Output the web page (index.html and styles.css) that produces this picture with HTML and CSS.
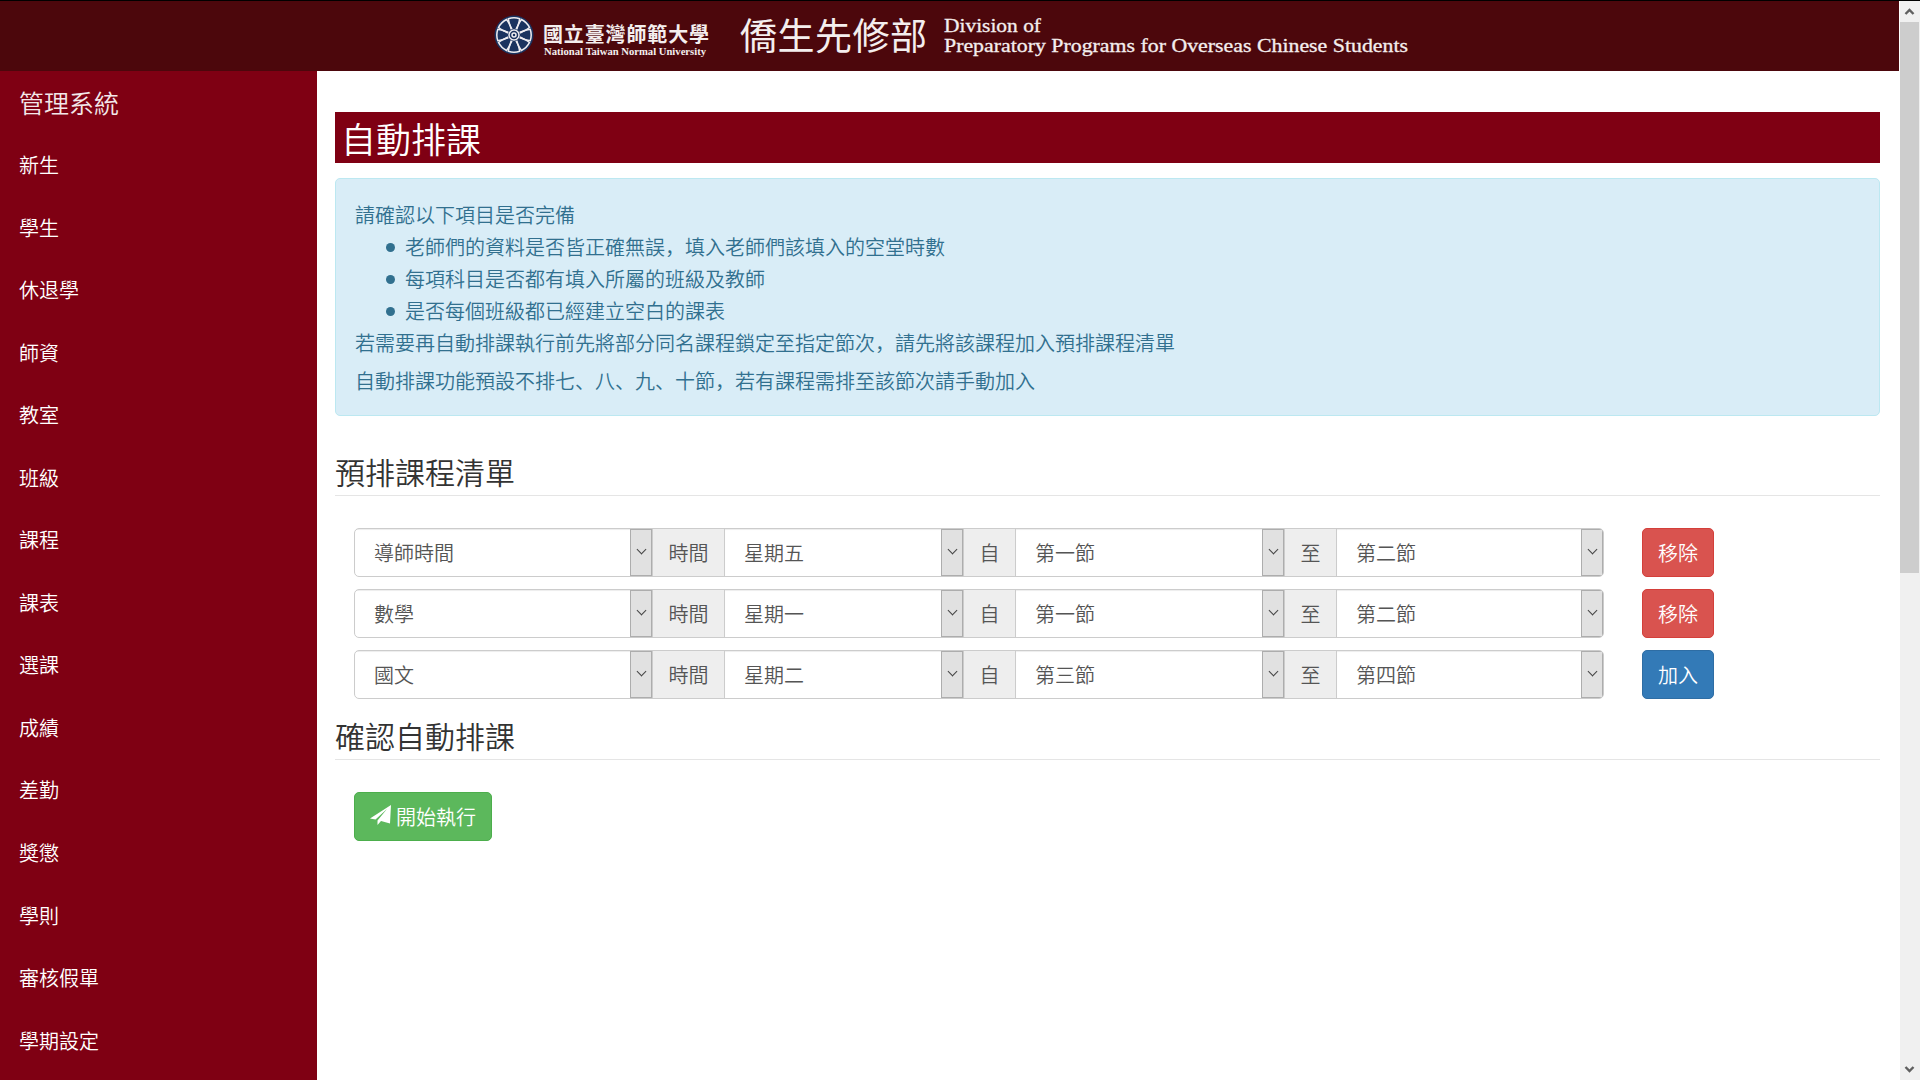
FILE: index.html
```
<!DOCTYPE html>
<html lang="zh-Hant">
<head>
<meta charset="utf-8">
<title>自動排課</title>
<link rel="stylesheet" href="styles.css">
</head>
<body>
<div class="page">
  <header class="banner">
    <svg class="banner-logo" width="920" height="70" viewBox="490 1 920 70">
      <circle cx="514" cy="35" r="19.5" fill="#1b335f"/>
      <g fill="none" stroke="#eeecf0" stroke-width="1.5">
        <circle cx="514" cy="35" r="5"/>
        <circle cx="514" cy="35" r="2"/>
        <g id="petal"><path d="M512 29 L509.500 24.500 L508.300 18.800 Q514 16.800 519.700 18.800 L518.500 24.500 L516 29"/></g>
        <use href="#petal" transform="rotate(45 514 35)"/>
        <use href="#petal" transform="rotate(90 514 35)"/>
        <use href="#petal" transform="rotate(135 514 35)"/>
        <use href="#petal" transform="rotate(180 514 35)"/>
        <use href="#petal" transform="rotate(225 514 35)"/>
        <use href="#petal" transform="rotate(270 514 35)"/>
        <use href="#petal" transform="rotate(315 514 35)"/>
      </g>
      <g fill="#f4eeee">
        <text class="logo-name" x="543" y="42" textLength="166">國立臺灣師範大學</text>
        <text class="logo-sub" x="544" y="54.500" textLength="162" lengthAdjust="spacingAndGlyphs">National Taiwan Normal University</text>
        <text class="logo-dept" x="740" y="50" textLength="187">僑生先修部</text>
        <text class="logo-en" x="944" y="32" textLength="97" lengthAdjust="spacingAndGlyphs">Division of</text>
        <text class="logo-en" x="944" y="52" textLength="464" lengthAdjust="spacingAndGlyphs">Preparatory Programs for Overseas Chinese Students</text>
      </g>
    </svg>
  </header>
  <div class="body">
    <nav class="sidebar">
      <a class="brand">管理系統</a>
      <a>新生</a><a>學生</a><a>休退學</a><a>師資</a><a>教室</a><a>班級</a><a>課程</a><a>課表</a><a>選課</a><a>成績</a><a>差勤</a><a>獎懲</a><a>學則</a><a>審核假單</a><a>學期設定</a>
    </nav>
    <main class="content">
      <h1>自動排課</h1>
      <div class="alert">
        <p>請確認以下項目是否完備</p>
        <ul>
          <li>老師們的資料是否皆正確無誤，填入老師們該填入的空堂時數</li>
          <li>每項科目是否都有填入所屬的班級及教師</li>
          <li>是否每個班級都已經建立空白的課表</li>
        </ul>
        <p>若需要再自動排課執行前先將部分同名課程鎖定至指定節次，請先將該課程加入預排課程清單</p>
        <p class="last">自動排課功能預設不排七、八、九、十節，若有課程需排至該節次請手動加入</p>
      </div>
      <h2>預排課程清單</h2>
      <div class="rows">
        <div class="row">
          <div class="group">
            <div class="select">導師時間<i class="arrow"></i></div><span class="addon">時間</span>
            <div class="select">星期五<i class="arrow"></i></div><span class="addon">自</span>
            <div class="select">第一節<i class="arrow"></i></div><span class="addon">至</span>
            <div class="select">第二節<i class="arrow"></i></div>
          </div>
          <button class="btn danger">移除</button>
        </div>
        <div class="row">
          <div class="group">
            <div class="select">數學<i class="arrow"></i></div><span class="addon">時間</span>
            <div class="select">星期一<i class="arrow"></i></div><span class="addon">自</span>
            <div class="select">第一節<i class="arrow"></i></div><span class="addon">至</span>
            <div class="select">第二節<i class="arrow"></i></div>
          </div>
          <button class="btn danger">移除</button>
        </div>
        <div class="row">
          <div class="group">
            <div class="select">國文<i class="arrow"></i></div><span class="addon">時間</span>
            <div class="select">星期二<i class="arrow"></i></div><span class="addon">自</span>
            <div class="select">第三節<i class="arrow"></i></div><span class="addon">至</span>
            <div class="select">第四節<i class="arrow"></i></div>
          </div>
          <button class="btn primary">加入</button>
        </div>
      </div>
      <h2 class="confirm">確認自動排課</h2>
      <button class="btn success"><svg width="21" height="20" viewBox="0 0 21 20" fill="#fff"><path d="M21 0 L0 13.500 L5.500 14.500 L17 4 L7.500 15.500 V20 L11 16 L20 18.500 Z"/></svg>開始執行</button>
    </main>
  </div>
</div>
<div class="scrollbar">
  <svg class="up" width="20" height="21" viewBox="0 0 20 21"><path d="M5.500 13 L9.500 9 L13.500 13" fill="none" stroke="#606060" stroke-width="2.400"/></svg>
  <div class="thumb"></div>
  <svg class="down" width="20" height="21" viewBox="0 0 20 21"><path d="M5.500 8 L9.500 12 L13.500 8" fill="none" stroke="#606060" stroke-width="2.400"/></svg>
</div>
</body>
</html>
```
FILE: styles.css
```
* { box-sizing: border-box; }
body {
  margin: 0;
  height: 1080px;
  display: flex;
  overflow: hidden;
  border-top: 1px solid #000;
  background: #fff;
  color: #333;
  font: 350 20px/32px "Noto Sans CJK SC", sans-serif;
  font-feature-settings: "locl" 0;
}
.page { width: 1900px; display: flex; flex-direction: column; }
.banner {
  width: 1899px;
  height: 70px;
  flex: none;
  padding-left: 490px;
  background: #4c070c;
}
.banner-logo { display: block; }
.logo-name { font: 700 20px "Noto Sans CJK TC", sans-serif; }
.logo-sub { font: 700 10px "Liberation Serif", serif; }
.logo-dept { font: 400 37px "Noto Sans CJK TC", sans-serif; }
.logo-en { font: 400 19px "Liberation Serif", serif; stroke: #f4eeee; stroke-width: .3px; }
.body { flex: 1; display: flex; min-height: 0; }
.sidebar {
  width: 317px;
  flex: none;
  display: flex;
  flex-direction: column;
  padding-left: 19px;
  background: #7f0013;
  color: #fff;
  overflow: hidden;
}
.sidebar a { flex: none; height: 62.550px; line-height: 62.550px; }
.sidebar .brand { font-size: 25px; height: 63px; line-height: 62px; color: #f3e8ea; }
.content { flex: 1; padding: 41px 20px 0 18px; }
h1, h2, p, ul { margin: 0; padding: 0; font-weight: 350; }
h1 {
  height: 51px;
  padding-left: 6px;
  background: #7f0013;
  color: #fff;
  font-size: 35px;
  line-height: 51px;
}
.alert {
  height: 238px;
  margin-top: 15px;
  padding: 20px 19px;
  border: 1px solid #bce8f1;
  border-radius: 5px;
  background: #d9edf7;
  color: #31708f;
}
.alert ul { padding-left: 31px; list-style: none; }
.alert li { display: flex; align-items: center; gap: 10px; }
.alert li::before {
  content: "";
  width: 9px;
  height: 9px;
  border-radius: 50%;
  background: #31708f;
}
.alert .last { margin-top: 6px; }
h2 {
  height: 46px;
  margin-top: 34px;
  border-bottom: 1px solid #e5e5e5;
  font-size: 30px;
  line-height: 42px;
}
.rows {
  display: flex;
  flex-direction: column;
  gap: 12px;
  padding: 32px 0 0 19px;
}
.row { display: flex; gap: 38px; }
.group {
  width: 1250px;
  height: 49px;
  display: grid;
  grid-template-columns: 297px 73px 238px 53px 268px 53px 266px;
  border: 1px solid #ccc;
  border-radius: 5px;
  overflow: hidden;
  color: #555;
}
.select {
  display: flex;
  align-items: center;
  justify-content: space-between;
  padding-left: 19px;
  box-shadow: inset 0 1px 1px rgba(0, 0, 0, .075);
}
.arrow {
  width: 22px;
  height: 47px;
  display: flex;
  align-items: center;
  justify-content: center;
  border: 1px solid #adadad;
  background: #e1e1e1;
}
.arrow::before {
  content: "";
  width: 6px;
  height: 6px;
  margin-top: -6px;
  border: solid #444;
  border-width: 0 1px 1px 0;
  transform: rotate(45deg);
}
.addon {
  display: flex;
  align-items: center;
  justify-content: center;
  border: 1px solid #ccc;
  border-width: 0 1px;
  background: #eee;
}
.btn {
  width: 72px;
  height: 49px;
  display: flex;
  align-items: center;
  justify-content: center;
  padding: 0;
  border: 1px solid;
  border-radius: 5px;
  color: #fff;
  font: inherit;
}
.danger { background: #d9534f; border-color: #d43f3a; }
.primary { background: #337ab7; border-color: #2e6da4; }
.confirm { margin-top: 15px; }
.success {
  width: 138px;
  gap: 5px;
  margin: 32px 0 0 19px;
  background: #5cb85c;
  border-color: #4cae4c;
}
.success svg { margin-top: -3px; }
.scrollbar {
  width: 20px;
  flex: none;
  display: flex;
  flex-direction: column;
  background: #f0f0f0;
}
.scrollbar svg { flex: none; }
.thumb { width: 19px; height: 551px; background: #cdcdcd; }
.down { margin-top: auto; }
```
